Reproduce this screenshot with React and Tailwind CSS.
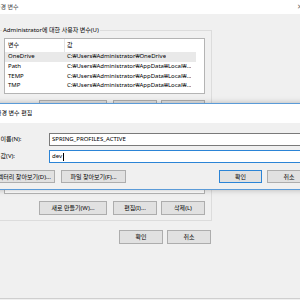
const Btn = ({ className = '', primary = false, children }) => (
  <div
    className={`flex shrink-0 items-center justify-center whitespace-nowrap border bg-[#e1e1e1] text-[6px] leading-none text-black ${
      primary ? 'border-[#2b84d6]' : 'border-[#adadad]'
    } ${className}`}
  >
    {children}
  </div>
);

const rows = [
  ['OneDrive', 'C:₩Users₩Administrator₩OneDrive', true],
  ['Path', 'C:₩Users₩Administrator₩AppData₩Local₩...', false],
  ['TEMP', 'C:₩Users₩Administrator₩AppData₩Local₩...', false],
  ['TMP', 'C:₩Users₩Administrator₩AppData₩Local₩...', false],
];

const VarList = ({ height, items }) => (
  <div className={`ml-[7px] mt-[2px] w-[201px] overflow-hidden border border-[#b4b4b4] bg-white ${height}`}>
    <div className="flex h-[13px] items-center text-[6px]">
      <span className="w-[59px] pl-[3px]">변수</span>
      <span className="h-full border-l border-[#e5e5e5]" />
      <span className="pl-[2px]">값</span>
    </div>
    {items.map(([name, value, selected]) => (
      <div
        key={name}
        className={`flex h-[9.7px] w-[191px] items-center whitespace-nowrap text-[6px] ${selected ? 'bg-[#e9e9e9]' : ''}`}
      >
        <span className="w-[60px] shrink-0 pl-[3px]">{name}</span>
        <span className="overflow-hidden pl-[2px]">{value}</span>
      </div>
    ))}
  </div>
);

const VarGroup = ({ title, className = '', listHeight, items, gap, pb }) => (
  <div className={`ml-[-4px] w-[216px] border border-[#dcdcdc] ${pb} ${className}`}>
    <span className="ml-[5px] mt-[-6px] block w-fit bg-[#f0f0f0] px-[1px] text-[6px] leading-[11px]">{title}</span>
    <VarList height={listHeight} items={items} />
    <div className={`flex ${gap}`}>
      <Btn className="ml-[42px] h-[14px] w-[68px]">새로 만들기(W)...</Btn>
      <Btn className="ml-[6px] h-[14px] w-[44px]">편집(I)...</Btn>
      <Btn className="ml-[4px] h-[14px] w-[44px]">삭제(L)</Btn>
    </div>
  </div>
);

export default function App() {
  return (
    <div className="relative h-[300px] w-[300px] overflow-hidden bg-[#f0f0f0] font-['Noto_Sans','Noto_Sans_CJK_KR',sans-serif] text-black">
      {/* 뒤쪽 환경 변수 창 */}
      <div className="h-[299px] border-b border-[#cfcfcf]">
        <div className="flex h-[14px] items-center bg-white">
          <span className="ml-[-5px] text-[6px] text-[#444]">환경 변수</span>
          <span className="ml-auto mr-[-3px] text-[7px] text-[#777]">✕</span>
        </div>

        <VarGroup
          title="Administrator에 대한 사용자 변수(U)"
          className="mt-[16px]"
          listHeight="h-[56px]"
          items={rows}
          gap="mt-[6px]"
          pb="pb-[6px]"
        />
        <VarGroup
          title="시스템 변수(S)"
          className="mt-[8px]"
          listHeight="h-[57px]"
          items={rows}
          gap="mt-[7px]"
          pb="pb-[5px]"
        />

        <div className="mt-[9px] flex w-[211px] justify-end gap-[4px]">
          <Btn className="h-[14px] w-[44px]">확인</Btn>
          <Btn className="h-[14px] w-[44px]">취소</Btn>
        </div>
      </div>

      {/* 환경 변수 편집 대화 상자 */}
      <div className="absolute left-[-22px] top-[103px] w-[345px] border-y border-[#5b9bd8] bg-[#f0f0f0] shadow-[0_0_6px_rgba(0,0,0,0.25)]">
        <div className="flex h-[19px] items-center bg-white pl-[18px] text-[6px] text-black">환경 변수 편집</div>
        <div className="pb-[6px] pl-[10px] pr-[12px]">
          <div className="mt-[10px] flex items-center">
            <span className="w-[61px] shrink-0 text-[6px]">변수 이름(N):</span>
            <div className="flex h-[13px] flex-1 items-center border border-[#7a7a7a] bg-white px-[2px] text-[6px]">
              SPRING_PROFILES_ACTIVE
            </div>
          </div>
          <div className="mt-[4px] flex items-center">
            <span className="w-[61px] shrink-0 text-[6px]">변수 값(V):</span>
            <div className="flex h-[13px] flex-1 items-center border border-[#2b84d6] bg-white px-[2px] text-[6px]">
              dev
              <span className="ml-[1px] h-[8px] w-[1px] bg-black" />
            </div>
          </div>
          <div className="mt-[7px] flex items-center">
            <Btn className="h-[13px] w-[67px]">디렉터리 찾아보기(D)...</Btn>
            <Btn className="ml-[6px] h-[13px] w-[65px]">파일 찾아보기(F)...</Btn>
            <Btn primary className="ml-auto h-[13px] w-[43px]">확인</Btn>
            <Btn className="ml-[5px] h-[13px] w-[44px]">취소</Btn>
          </div>
        </div>
      </div>
    </div>
  );
}
